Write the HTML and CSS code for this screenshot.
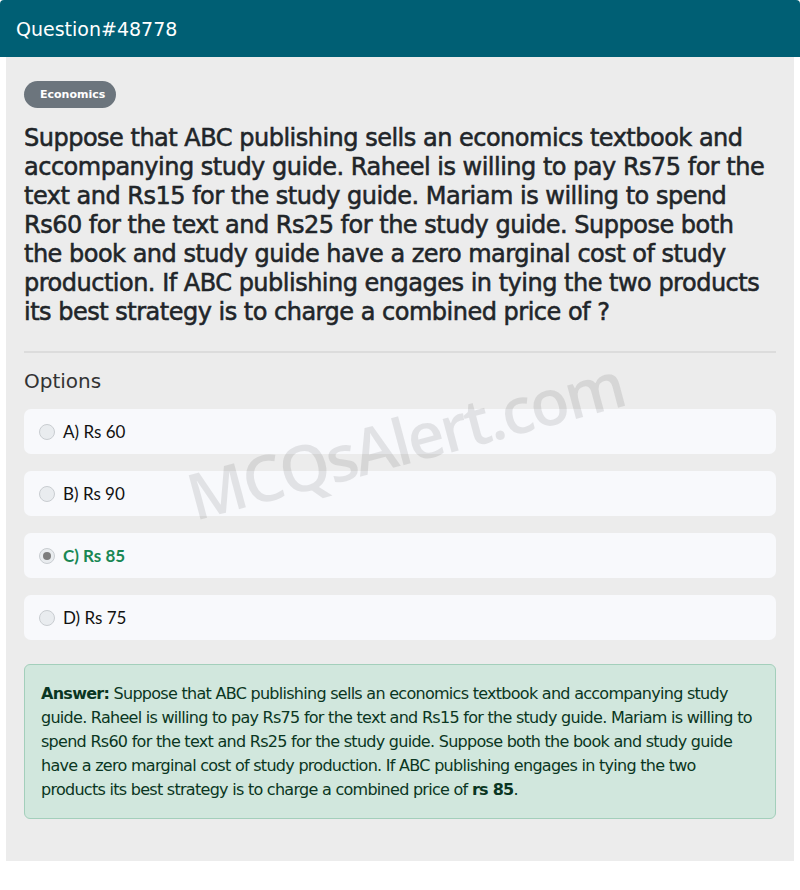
FILE: index.html
```html
<!DOCTYPE html>
<html>
<head>
<meta charset="utf-8">
<link rel="stylesheet" href="styles.css">
</head>
<body>
<div class="card">
  <div class="card-header">Question#48778</div>
  <div class="card-body">
    <span class="badge">Economics</span>
    <h1 class="question">Suppose that ABC publishing sells an economics textbook and accompanying study guide. Raheel is willing to pay Rs75 for the text and Rs15 for the study guide. Mariam is willing to spend Rs60 for the text and Rs25 for the study guide. Suppose both the book and study guide have a zero marginal cost of study production. If ABC publishing engages in tying the two products its best strategy is to charge a combined price of ?</h1>
    <hr class="sep">
    <h2 class="options-title">Options</h2>
    <div class="options">
      <div class="option"><span class="radio"></span><span class="opt-text">A) Rs 60</span></div>
      <div class="option"><span class="radio"></span><span class="opt-text">B) Rs 90</span></div>
      <div class="option correct"><span class="radio checked"></span><span class="opt-text">C) Rs 85</span></div>
      <div class="option"><span class="radio"></span><span class="opt-text">D) Rs 75</span></div>
    </div>
    <div class="answer"><b>Answer:</b> Suppose that ABC publishing sells an economics textbook and accompanying study guide. Raheel is willing to pay Rs75 for the text and Rs15 for the study guide. Mariam is willing to spend Rs60 for the text and Rs25 for the study guide. Suppose both the book and study guide have a zero marginal cost of study production. If ABC publishing engages in tying the two products its best strategy is to charge a combined price of <b>rs 85</b>.</div>
    <div class="watermark">MCQsAlert.com</div>
  </div>
</div>
</body>
</html>
```
FILE: styles.css
```css
* { box-sizing: border-box; }
html, body { margin: 0; padding: 0; background: #fff; }
body { font-family: "DejaVu Sans", sans-serif; color: #212529; }
.card { width: 800px; }
.card-header {
  height: 57px;
  background: #005f74;
  color: #fff;
  font-size: 19px;
  letter-spacing: 0;
  padding: 0 16px;
  display: flex;
  align-items: center;
  border-radius: 4px 4px 0 0;
}
.card-body {
  position: relative;
  margin: 0 6px;
  background: #ececec;
  padding: 24px 18px 42px;
  overflow: hidden;
}
.badge {
  display: inline-block;
  height: 27px;
  line-height: 27px;
  padding: 0 11px 0 16px;
  border-radius: 14px;
  background: #6c757d;
  color: #fff;
  font-size: 11px;
  font-weight: bold;
}
.question {
  margin: 16px 0 0;
  font-size: 24px;
  line-height: 29px;
  font-weight: normal;
  letter-spacing: -0.5px;
  -webkit-text-stroke: 0.55px #212529;
  color: #212529;
}
.sep {
  margin: 24px 0 0;
  border: 0;
  border-top: 2px solid #dcdcdc;
}
.options-title {
  margin: 16px 0 0;
  font-size: 20px;
  line-height: 24px;
  font-weight: normal;
  color: #333;
}
.options {
  margin-top: 16px;
  display: flex;
  flex-direction: column;
  gap: 17px;
}
.option {
  height: 45px;
  background: #f8f9fc;
  border-radius: 7px;
  display: flex;
  align-items: center;
  padding-left: 15px;
  gap: 8px;
  font-family: Lato, sans-serif;
  font-size: 17px;
  color: #111;
}
.radio {
  width: 16px;
  height: 16px;
  border-radius: 50%;
  background: #e9ecef;
  border: 1px solid #c9cdd1;
  display: flex;
  align-items: center;
  justify-content: center;
}
.radio.checked::after {
  content: "";
  width: 8px;
  height: 8px;
  border-radius: 50%;
  background: #7d7d7d;
}
.option.correct .opt-text { color: #198754; font-weight: bold; }
.answer {
  margin-top: 24px;
  background: #d1e7dd;
  border: 1px solid #a3cfbb;
  border-radius: 6px;
  padding: 17px 18px 16px 16px;
  color: #0a3622;
  font-size: 16px;
  line-height: 24px;
  letter-spacing: -0.72px;
}
.watermark {
  position: absolute;
  left: 175px;
  top: 340px;
  width: 440px;
  text-align: center;
  transform: rotate(-15deg);
  font-family: "Open Sans", sans-serif;
  font-weight: 600;
  font-size: 64px;
  letter-spacing: -2.5px;
  color: rgba(0, 0, 0, 0.09);
  pointer-events: none;
  white-space: nowrap;
}
```
